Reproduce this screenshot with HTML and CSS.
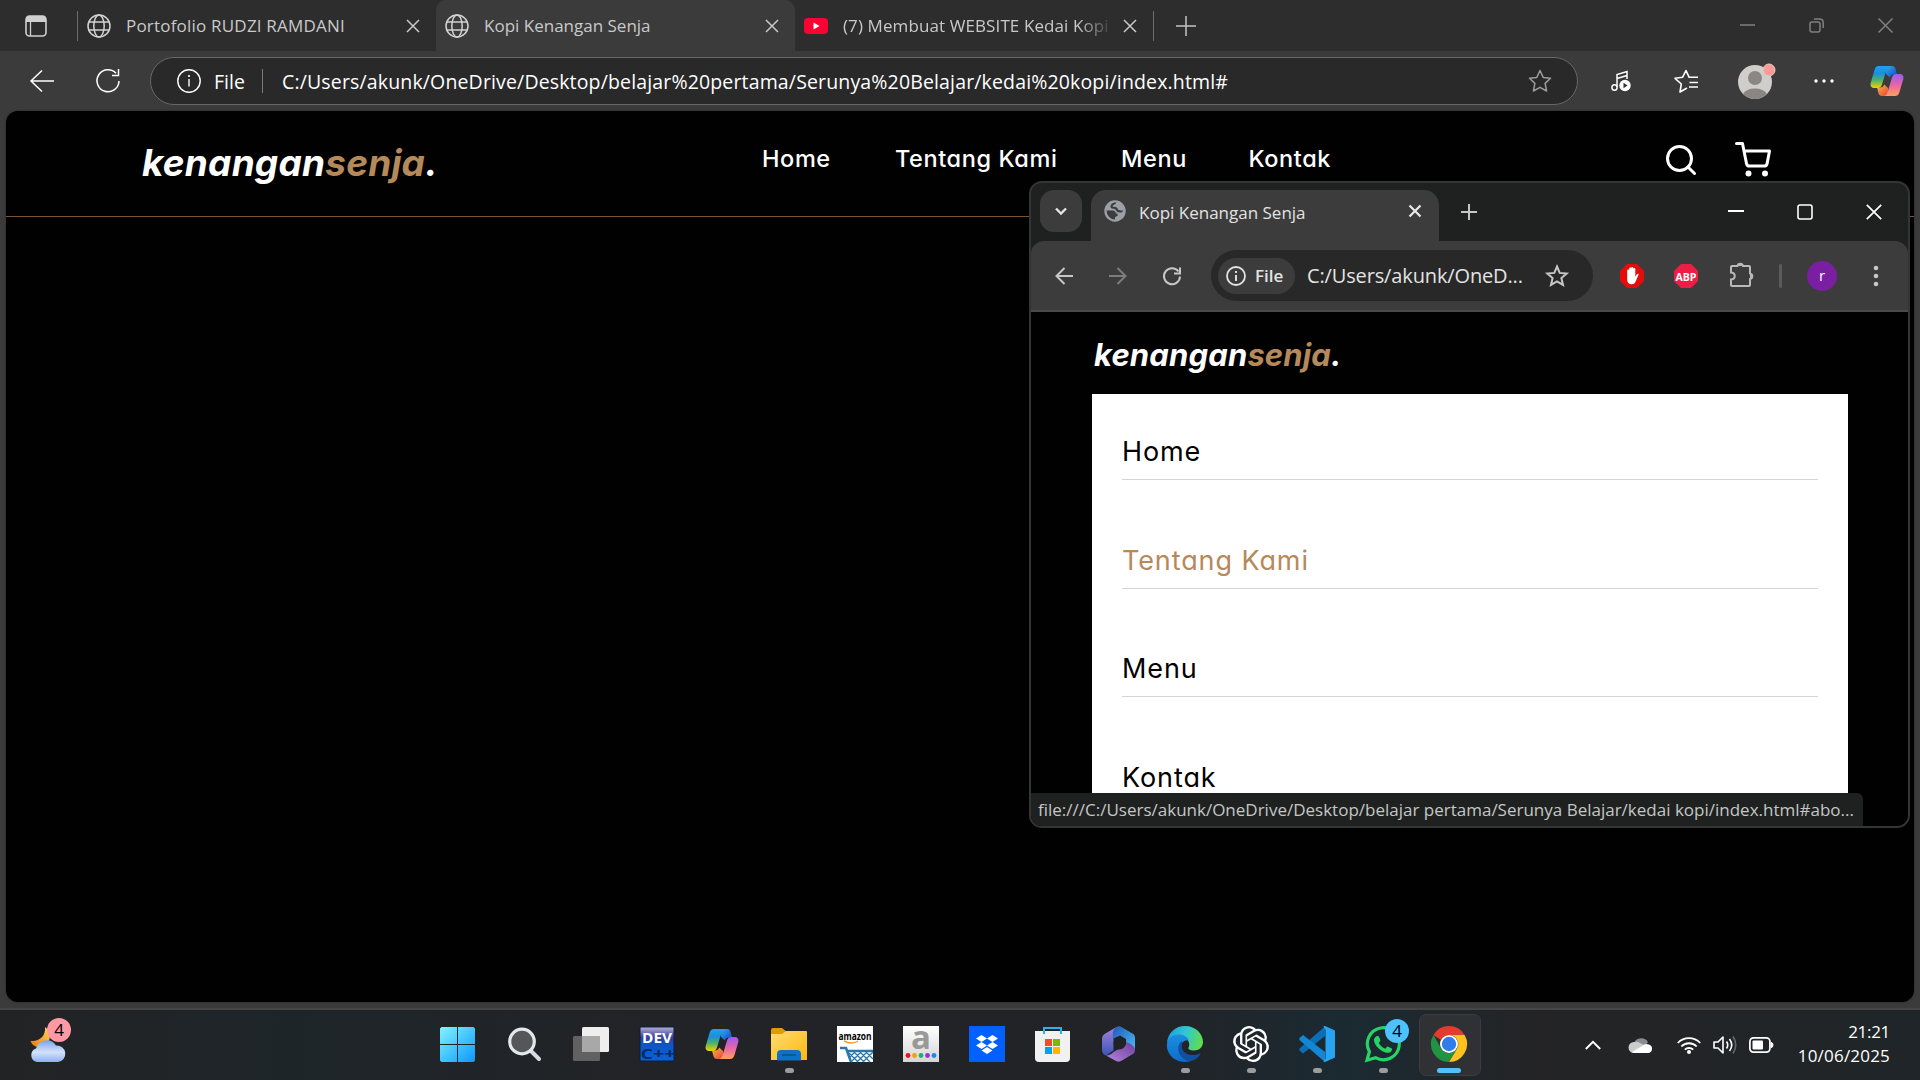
FILE: index.html
```html
<!DOCTYPE html>
<html lang="id">
<head>
<meta charset="utf-8">
<title>Kopi Kenangan Senja</title>
<link rel="stylesheet" href="styles.css">
</head>
<body>
<svg class="defs" width="0" height="0">
  <defs>
    <linearGradient id="cpL" x1="0" y1="0" x2="0" y2="1"><stop offset="0" stop-color="#1fa0f5"/><stop offset=".35" stop-color="#1b8fd8"/><stop offset=".65" stop-color="#4fb36a"/><stop offset="1" stop-color="#f7d000"/></linearGradient>
    <linearGradient id="cpR" x1="0" y1="0" x2="0" y2="1"><stop offset="0" stop-color="#9a5cf5"/><stop offset=".5" stop-color="#e765a8"/><stop offset="1" stop-color="#ffa05c"/></linearGradient>
    <linearGradient id="cpT" x1="0" y1="0" x2="1" y2="1"><stop offset="0" stop-color="#27b4f0"/><stop offset="1" stop-color="#1740c8"/></linearGradient>
    <linearGradient id="cpB" x1="0" y1="0" x2="1" y2="1"><stop offset="0" stop-color="#ffb43c"/><stop offset="1" stop-color="#e5413c"/></linearGradient>
    <symbol id="copilot" viewBox="0 0 34 30">
      <path d="M15 0h7c2 0 3 1 3.600 3L27 8.500h-3c-2.500 0-3.500 1-4.200 3L16 8z" fill="url(#cpT)"/>
      <path d="M19 30h-7c-2 0-3-1-3.600-3L7 21.500h3c2.500 0 3.500-1 4.200-3L18 22z" fill="url(#cpB)"/>
      <path d="M9 0h11c-2 .3-2.800 1.500-3.500 3.500L12 18.500c-.8 2.500-2 3.500-4.500 3.500H4.500C1.500 22 0 20 .7 17L4.500 4C5.300 1.400 6.500 0 9 0z" fill="url(#cpL)"/>
      <path d="M25 30H14c2-.3 2.800-1.500 3.500-3.500L22 11.500c.8-2.500 2-3.500 4.500-3.500h3c3 0 4.500 2 3.800 5L29.500 26c-.8 2.600-2 4-4.500 4z" fill="url(#cpR)"/>
    </symbol>
    <symbol id="globe" viewBox="0 0 24 24"><g fill="none" stroke="#d2d2d2" stroke-width="1.500"><circle cx="12" cy="12" r="11"/><ellipse cx="12" cy="12" rx="5.200" ry="11"/><path d="M1.800 8h20.400M1.800 16h20.400"/></g></symbol>
    <symbol id="cross" viewBox="0 0 14 14"><path d="M1 1l12 12M13 1L1 13" fill="none" stroke="currentColor" stroke-width="1.500"/></symbol>
  </defs>
</svg>

<div class="edge">
  <div class="tabstrip">
    <svg class="workspaces" viewBox="0 0 22 22"><rect x="1" y="1" width="20" height="20" rx="3.500" fill="none" stroke="#d0d0d0" stroke-width="1.600"/><path d="M1 7V4a3 3 0 013-3h14a3 3 0 013 3v3z" fill="#d0d0d0"/><path d="M5.500 7v14" stroke="#d0d0d0" stroke-width="1.300"/></svg>
    <i class="strip-line"></i>
    <div class="tab tab-one"><svg class="ico24"><use href="#globe"/></svg><span class="tab-title">Portofolio RUDZI RAMDANI</span><svg class="tab-x"><use href="#cross"/></svg></div>
    <div class="tab tab-two"><svg class="ico24"><use href="#globe"/></svg><span class="tab-title">Kopi Kenangan Senja</span><svg class="tab-x"><use href="#cross"/></svg></div>
    <div class="tab tab-three"><svg class="ico24" viewBox="0 0 24 24"><rect y="4" width="24" height="16" rx="4" fill="#ff0033"/><path d="M9.500 8.600v6.800l6-3.400z" fill="#fff"/></svg><span class="tab-title fade">(7) Membuat WEBSITE Kedai Kopi</span><svg class="tab-x"><use href="#cross"/></svg></div>
    <i class="strip-line"></i>
    <svg class="new-tab" viewBox="0 0 20 20"><path d="M10 0v20M0 10h20" stroke="#c4c4c4" stroke-width="1.500"/></svg>
    <div class="edge-controls">
      <svg viewBox="0 0 15 15"><path d="M0 7h15" stroke="#808080" stroke-width="1.500"/></svg>
      <svg viewBox="0 0 15 15"><g fill="none" stroke="#808080" stroke-width="1.500"><rect x="1" y="4" width="10" height="10" rx="2"/><path d="M5 1h5.500A3.700 3.700 0 0114.200 4.500V10"/></g></svg>
      <svg viewBox="0 0 15 15"><path d="M.5.5l14 14M14.500.5l-14 14" stroke="#808080" stroke-width="1.500"/></svg>
    </div>
  </div>

  <div class="edge-bar">
    <svg class="ico24 back" viewBox="0 0 24 24"><path d="M24 12H1M12 1.500L1 12l11 10.500" fill="none" stroke="#fff" stroke-width="1.500"/></svg>
    <svg class="ico24 reload" viewBox="0 0 24 24"><path d="M20 4.200A11 11 0 1023 12M22.500 0v6.500H16" fill="none" stroke="#fff" stroke-width="1.500"/></svg>
    <div class="address">
      <svg class="ico24" viewBox="0 0 24 24"><circle cx="12" cy="12" r="11.200" fill="none" stroke="#fff" stroke-width="1.400"/><path d="M12 10v7.500" stroke="#fff" stroke-width="1.400"/><circle cx="12" cy="7" r="1.100" fill="#fff"/></svg>
      <span class="addr-file">File</span><i class="addr-line"></i>
      <span class="addr-url">C:/Users/akunk/OneDrive/Desktop/belajar%20pertama/Serunya%20Belajar/kedai%20kopi/index.html#</span>
      <svg class="ico24 addr-star" viewBox="0 0 24 24"><path d="M12 1.500l3.200 6.900 7.300.8-5.400 5.200 1.500 7.600-6.600-3.700L5.400 22l1.500-7.600L1.500 9.200l7.300-.8z" fill="none" stroke="#9c9c9c" stroke-width="1.500" stroke-linejoin="round"/></svg>
    </div>
    <svg class="music" viewBox="0 0 20 22"><g fill="none" stroke="#fff" stroke-width="1.500"><path d="M6 17V4.500l10-3V9M6 8.500l10-3"/><ellipse cx="3.500" cy="17.500" rx="2.600" ry="2.800"/></g><circle cx="14" cy="15.500" r="5.700" fill="#fff"/><path d="M12.500 12.800v5.400l4-2.700z" fill="#333"/></svg>
    <svg class="favs" viewBox="0 0 24 24"><g fill="none" stroke="#fff" stroke-width="1.600" stroke-linejoin="round"><path d="M13 19l-7 4 1.300-8L1 9.300l7.500-1L12 1.500l3.200 6.800H24M15.500 13.500H24M15 18h9"/></g></svg>
    <div class="profile"><svg viewBox="0 0 38 36"><circle cx="17" cy="19" r="17" fill="#d0cecb"/><circle cx="17" cy="15" r="7" fill="#8a8683"/><path d="M5 31a13 9 0 0124 0 17 17 0 01-24 0z" fill="#8a8683"/><circle cx="31" cy="7" r="6" fill="#ff9a94" stroke="#d8cfcc" stroke-width="1"/></svg></div>
    <svg class="more" viewBox="0 0 20 4"><g fill="#fff"><circle cx="2" cy="2" r="1.700"/><circle cx="10" cy="2" r="1.700"/><circle cx="18" cy="2" r="1.700"/></g></svg>
    <svg class="edge-copilot"><use href="#copilot"/></svg>
  </div>

  <div class="page">
    <div class="navbar">
      <a class="logo logo-lg">kenangan<span>senja</span>.</a>
      <div class="links"><a>Home</a><a>Tentang Kami</a><a>Menu</a><a>Kontak</a></div>
      <div class="extra">
        <svg viewBox="0 0 24 24"><circle cx="11" cy="11" r="8"/><path d="M21 21l-4.350-4.350"/></svg>
        <svg viewBox="0 0 24 24"><circle cx="9" cy="21" r="1"/><circle cx="20" cy="21" r="1"/><path d="M1 1h4l2.680 13.390a2 2 0 002 1.610h9.720a2 2 0 002-1.610L23 6H6"/></svg>
      </div>
    </div>
  </div>
</div>

<div class="chrome">
  <div class="chrome-top">
    <div class="drop"><svg viewBox="0 0 12 8"><path d="M1 1.500l5 5 5-5" fill="none" stroke="#e3e3e3" stroke-width="2.400"/></svg></div>
    <div class="chrome-tab">
      <svg class="fav" viewBox="0 0 22 22"><circle cx="11" cy="11" r="10.700" fill="#9aa0a6"/><path d="M2.600 10.500h6c2 0 3.200 1.200 3.200 3h1.800v2.600c-1 .3-2.600.2-2.600 1.800v1.700A8.800 8.800 0 012.600 10.500z" fill="#3c3c3c"/><path d="M12.500 2.500c-1 2.700-3.800 1.500-3.800 4.300 2.300.2 4.200 0 4.800 1.800.5 1.700 2 2.300 5.800 1.800-.5 1.500-1.800 2.200-3.400 2.200-2.700 0-3.300-1-4.100-2.800-1-1.500-4.800-.5-5.300-2.800C6.200 4.500 8.700 2 12.500 2.500z" fill="#3c3c3c"/></svg>
      <span class="chrome-title">Kopi Kenangan Senja</span>
      <svg class="chrome-x" viewBox="0 0 14 14"><path d="M1.500 1.500l11 11M12.500 1.500l-11 11" stroke="#e6e6e6" stroke-width="2.300"/></svg>
    </div>
    <svg class="chrome-plus" viewBox="0 0 16 16"><path d="M8 0v16M0 8h16" stroke="#c7c7c7" stroke-width="2"/></svg>
    <div class="chrome-controls">
      <svg viewBox="0 0 16 16"><path d="M0 7h16" stroke="#fff" stroke-width="2"/></svg>
      <svg viewBox="0 0 16 16"><rect x="1" y="1" width="14" height="14" rx="2" fill="none" stroke="#fff" stroke-width="1.600"/></svg>
      <svg viewBox="0 0 16 16"><path d="M.8.8l14.400 14.400M15.200.8L.8 15.200" stroke="#fff" stroke-width="1.700"/></svg>
    </div>
  </div>
  <div class="chrome-bar">
    <svg class="arrow" viewBox="0 0 18 18"><path d="M18 9H2M9.500 1L1.500 9l8 8" fill="none" stroke="#c7c7c7" stroke-width="2"/></svg>
    <svg class="arrow" viewBox="0 0 18 18"><path d="M0 9h16M8.500 1l8 8-8 8" fill="none" stroke="#7d7d7d" stroke-width="2"/></svg>
    <svg class="arrow" viewBox="0 0 18 18"><path d="M15.500 4.500A8 8 0 1017 9.500M17 .5v6h-6" fill="none" stroke="#c7c7c7" stroke-width="2"/></svg>
    <div class="omnibox">
      <div class="chip"><svg viewBox="0 0 20 20"><circle cx="10" cy="10" r="9" fill="none" stroke="#e3e3e3" stroke-width="1.800"/><path d="M10 9v6M10 5v2" stroke="#e3e3e3" stroke-width="1.900"/></svg><span>File</span></div>
      <span class="omni-url">C:/Users/akunk/OneD...</span>
      <svg class="omni-star" viewBox="0 0 24 24"><path d="M12 2.500l2.700 6.400 7 .6-5.300 4.600 1.600 6.800-6-3.600-6 3.600 1.600-6.800-5.300-4.600 7-.6z" fill="none" stroke="#c7c7c7" stroke-width="2"/></svg>
    </div>
    <div class="ext">
      <svg viewBox="0 0 24 24"><path d="M7 0h10l7 7v10l-7 7H7l-7-7V7z" fill="#e40d0d"/><path d="M7.200 12V6.500a1 1 0 012 0V4.600a1 1 0 012 0V4a1 1 0 012 0v1a1 1 0 012.100 0v7.800l1.500-2.500c.9-1.200 2.200-.6 1.700.5l-3 7c-.8 1.700-1.800 2.500-3.800 2.500-3 0-4.500-1.800-4.500-4.600z" fill="#fff"/></svg>
      <svg viewBox="0 0 24 24"><path d="M7 0h10l7 7v10l-7 7H7l-7-7V7z" fill="#ed1e45"/><text x="12" y="16.500" text-anchor="middle" class="abp" textLength="21" lengthAdjust="spacingAndGlyphs">ABP</text></svg>
      <svg class="puzzle" viewBox="0 0 26 26"><path d="M3 4h5.500a2.800 2.800 0 015.500 0H20a1 1 0 011 1v6.500a2.800 2.800 0 010 5.500V23a1 1 0 01-1 1H3a1 1 0 01-1-1v-5.500c5-.5 5-6.500 0-7V5a1 1 0 011-1z" fill="none" stroke="#b9b9b9" stroke-width="2"/><path d="M8.500 4a2.800 2.800 0 015.500 0zM21 11.500a2.800 2.800 0 010 5.500z" fill="#b9b9b9"/></svg>
    </div>
    <i class="ext-line"></i>
    <div class="avatar">r</div>
    <svg class="dots" viewBox="0 0 6 22"><g fill="#c7c7c7"><circle cx="3" cy="3" r="2.300"/><circle cx="3" cy="11" r="2.300"/><circle cx="3" cy="19" r="2.300"/></g></svg>
  </div>
  <div class="mobile">
    <a class="logo logo-sm">kenangan<span>senja</span>.</a>
    <div class="panel">
      <a>Home</a><a class="on">Tentang Kami</a><a>Menu</a><a>Kontak</a>
    </div>
  </div>
  <div class="status">file:///C:/Users/akunk/OneDrive/Desktop/belajar pertama/Serunya Belajar/kedai kopi/index.html#abo...</div>
</div>

<div class="taskbar">
  <div class="weather">
    <svg viewBox="0 0 38 46">
      <defs><linearGradient id="cl" x1="0" y1="0" x2="0" y2="1"><stop offset="0" stop-color="#7ba4ea"/><stop offset=".55" stop-color="#d3e2fa"/><stop offset="1" stop-color="#8fb0ee"/></linearGradient><linearGradient id="mn" x1="0" y1="1" x2="1" y2="0"><stop offset="0" stop-color="#f0760c"/><stop offset="1" stop-color="#ffd75a"/></linearGradient></defs>
      <path d="M15 8c8 6 6 20-6 20-4 0-7-2-8.500-6C9 23 16 17 15 8z" fill="url(#mn)"/>
      <path d="M7 43a7 7 0 01-1-13.500A11 11 0 0126 26.500 8.300 8.300 0 0128 43z" fill="url(#cl)"/>
    </svg>
    <span class="badge badge-w">4</span>
  </div>
  <div class="apps">
    <div class="app"><svg viewBox="0 0 36 36"><defs><linearGradient id="win" gradientUnits="userSpaceOnUse" x1="0" y1="0" x2="35" y2="36"><stop offset="0" stop-color="#80f5ff"/><stop offset="1" stop-color="#0a95ff"/></linearGradient></defs><path d="M-1 2.500L.5 1H16v17H-1zM17 1h15.500L34 2.500V18H17zM-1 19h17v17H.5L-1 34.500zM17 19h17v15.500L32.500 36H17z" fill="url(#win)"/></svg></div>
    <div class="app"><svg viewBox="0 0 36 36"><path d="M22 23l10 10" stroke="#d6dcdf" stroke-width="4" stroke-linecap="round"/><circle cx="15" cy="15.500" r="12.300" fill="#55565a" stroke="#e4e8ea" stroke-width="3.200"/></svg></div>
    <div class="app"><svg viewBox="0 0 36 36"><rect x="9" y="1" width="27" height="25" rx="1.500" fill="#eee"/><rect x="0" y="10" width="27" height="25" rx="1.500" fill="#666" opacity=".93"/><rect x="9" y="10" width="18" height="16" fill="#a8a8a8"/></svg></div>
    <div class="app"><svg viewBox="0 0 36 36"><defs><linearGradient id="dv" x1="0" y1="0" x2="0" y2="1"><stop offset="0" stop-color="#b5b3d6"/><stop offset=".3" stop-color="#3a3f98"/><stop offset=".5" stop-color="#0f52c8"/><stop offset="1" stop-color="#0864d8"/></linearGradient></defs><rect x="1" y="1" width="34" height="34" rx="1" fill="url(#dv)" stroke="#111a3a"/><text x="18" y="17" class="dev" text-anchor="middle" fill="#fff" textLength="30" lengthAdjust="spacingAndGlyphs">DEV</text><text x="19" y="32.500" class="dev" text-anchor="middle" fill="#082a66" textLength="35" lengthAdjust="spacingAndGlyphs">C++</text></svg></div>
    <div class="app"><svg class="app-copilot"><use href="#copilot"/></svg></div>
    <div class="app run"><svg viewBox="0 0 36 36"><defs><linearGradient id="fo" x1="0" y1="0" x2="1" y2="1"><stop offset="0" stop-color="#ffdc72"/><stop offset="1" stop-color="#fbb80f"/></linearGradient></defs><path d="M0 4a2 2 0 012-2h9l5 4v4H0z" fill="#e09b06"/><path d="M0 8h11l4-3h20a1 1 0 011 1v28H0z" fill="url(#fo)"/><path d="M6 34.500V28a4 4 0 014-4h16a4 4 0 014 4v6.500z" fill="#0d72c4"/><path d="M11 29h14" stroke="#0a4f90" stroke-width="1.500"/></svg></div>
    <div class="app"><svg viewBox="0 0 36 36"><path fill="#fff" d="M0 0h36v36H0z"/><text x="18" y="13.500" class="amz" text-anchor="middle" textLength="33" lengthAdjust="spacingAndGlyphs">amazon</text><path d="M7 15q8 4 14 0" fill="none" stroke="#f79a1f" stroke-width="1.500"/><path d="M3 22h6l5 14M11 25h25" fill="none" stroke="#2a78ab" stroke-width="2.500"/><path d="M12 27l9 9M17 26l10 10M23 26l10 10M29 26l7 7M36 26L26 36M30 26L20 36M24 26L14 36M18 26l-5 5" stroke="#2a78ab" stroke-width="1.300"/></svg></div>
    <div class="app"><svg viewBox="0 0 36 36"><defs><linearGradient id="ag" x1="0" y1="0" x2="0" y2="1"><stop offset="0" stop-color="#fff"/><stop offset="1" stop-color="#d5d5d5"/></linearGradient></defs><path fill="url(#ag)" d="M0 0h36v36H0z"/><text x="18" y="22.500" class="bige" text-anchor="middle">a</text><circle cx="5" cy="29.500" r="2.400" fill="#ee1111"/><circle cx="11.500" cy="29.500" r="2.400" fill="#f39c12"/><circle cx="18" cy="29.500" r="2.400" fill="#27ae60"/><circle cx="24.500" cy="29.500" r="2.400" fill="#8e35d8"/><circle cx="31" cy="29.500" r="2.400" fill="#1e88e5"/></svg></div>
    <div class="app"><svg viewBox="0 0 36 36"><path fill="#0061ff" d="M0 0h36v36H0z"/><path d="M12.500 9l5.500 3.500-5.500 3.500L7 12.500zM23.500 9l5.500 3.500-5.500 3.500-5.500-3.500zM12.500 16l5.500 3.500-5.500 3.500L7 19.500zM23.500 16l5.500 3.500-5.500 3.500-5.500-3.500zM18 21l5.500 3.500L18 28l-5.500-3.500z" fill="#fff"/></svg></div>
    <div class="app"><svg viewBox="0 0 36 36"><path d="M9 8V2h17v6" fill="none" stroke="#2db0ec" stroke-width="2"/><path d="M0 5h35v27a4 4 0 01-4 4H4a4 4 0 01-4-4z" fill="#f1f1f1"/><path d="M9 8V5M26 8V5" stroke="#2db0ec" stroke-width="2"/><path d="M10 13h7v7h-7z" fill="#f04e23"/><path d="M18 13h7v7h-7z" fill="#7db700"/><path d="M10 21h7v7h-7z" fill="#00a3ee"/><path d="M18 21h7v7h-7z" fill="#ffb800"/></svg></div>
    <div class="app"><svg viewBox="0 0 36 36"><defs><linearGradient id="m1" x1="0" y1="0" x2="0" y2="1"><stop offset="0" stop-color="#a583dc"/><stop offset="1" stop-color="#3a55b8"/></linearGradient><linearGradient id="m2" x1="0" y1="0" x2="1" y2="1"><stop offset="0" stop-color="#2357b8"/><stop offset="1" stop-color="#48bdf5"/></linearGradient><linearGradient id="m3" x1="0" y1="1" x2="1" y2="0"><stop offset="0" stop-color="#b484e0"/><stop offset="1" stop-color="#6a3f9a"/></linearGradient></defs><path d="M16 .8L3.500 8A5 5 0 001 12v12c0 3 1.500 4.500 4 5.500l7.500-5V12.500c0-5 1.500-9 3.500-11.700z" fill="url(#m1)"/><path d="M14 2c3-2.500 5-2.500 8 0l9.500 5.500c1.800 1 2.500 2.500 2.500 4.500v12c-1-3-4-4.500-9-7.500V13l-6-3.500-6.500 3C11 9 12 4 14 2z" fill="url(#m2)"/><path d="M34 24c0 2-1 3.500-3 4.500l-10 6c-2.500 1.500-4.500 1.500-7 0L5 29.500c3 0 5.500-1.500 7.500-3.500l12.500-7v-3c6 2 9 5 9 8z" fill="url(#m3)"/><circle cx="18.500" cy="17.500" r="6" fill="#202326"/></svg></div>
    <div class="app run"><svg viewBox="0 0 36 36"><defs><linearGradient id="e1" x1="0" y1=".3" x2="1" y2=".5"><stop offset="0" stop-color="#1c9fe0"/><stop offset=".5" stop-color="#31c6d4"/><stop offset="1" stop-color="#62de4a"/></linearGradient><linearGradient id="e2" x1="0" y1="0" x2="0" y2="1"><stop offset="0" stop-color="#1a8fe0"/><stop offset="1" stop-color="#0d6ccd"/></linearGradient></defs><path d="M0 17C1 6 9 0 18 0c11 0 18 8 18 16 0 5-4 8.500-9 8.500-4 0-6.500-1.500-5.500-3 1.500-2 1-6-2-8.500C14 8 5 10 0 17z" fill="url(#e1)"/><path d="M0 18C1 10 8 8.500 12 8.500c5 0 9 3 10 6-8-2-10 8-6 13.500 2 3 5 6 8 7C11 39-1 30 0 18z" fill="url(#e2)"/><path d="M15 15c-6 4-5 15 4 19.500 6 2 12-2 14.500-6.500.3-.8-.3-1-1-.5-8 4-17 0-17.500-6-.2-2.500 0-5 0-6.500z" fill="#1050a0"/></svg></div>
    <div class="app run"><svg viewBox="0 0 24 24"><path fill="#fff" d="M22.2819 9.8211a5.9847 5.9847 0 0 0-.5157-4.9108 6.0462 6.0462 0 0 0-6.5098-2.9A6.0651 6.0651 0 0 0 4.9807 4.1818a5.9847 5.9847 0 0 0-3.9977 2.9 6.0462 6.0462 0 0 0 .7427 7.0966 5.98 5.98 0 0 0 .511 4.9107 6.051 6.051 0 0 0 6.5146 2.9001A5.9847 5.9847 0 0 0 13.2599 24a6.0557 6.0557 0 0 0 5.7718-4.2058 5.9894 5.9894 0 0 0 3.9977-2.9001 6.0557 6.0557 0 0 0-.7475-7.0729zm-9.022 12.6081a4.4755 4.4755 0 0 1-2.8764-1.0408l.1419-.0804 4.7783-2.7582a.7948.7948 0 0 0 .3927-.6813v-6.7369l2.02 1.1686a.071.071 0 0 1 .038.052v5.5826a4.504 4.504 0 0 1-4.4945 4.4944zm-9.6607-4.1254a4.4708 4.4708 0 0 1-.5346-3.0137l.142.0852 4.783 2.7582a.7712.7712 0 0 0 .7806 0l5.8428-3.3685v2.3324a.0804.0804 0 0 1-.0332.0615L9.74 19.9502a4.4992 4.4992 0 0 1-6.1408-1.6464zM2.3408 7.8956a4.485 4.485 0 0 1 2.3655-1.9728V11.6a.7664.7664 0 0 0 .3879.6765l5.8144 3.3543-2.0201 1.1685a.0757.0757 0 0 1-.071 0l-4.8303-2.7865A4.504 4.504 0 0 1 2.3408 7.872zm16.5963 3.8558L13.1038 8.364 15.1192 7.2a.0757.0757 0 0 1 .071 0l4.8303 2.7913a4.4944 4.4944 0 0 1-.6765 8.1042v-5.6772a.79.79 0 0 0-.407-.667zm2.0107-3.0231l-.142-.0852-4.7735-2.7818a.7759.7759 0 0 0-.7854 0L9.409 9.2297V6.8974a.0662.0662 0 0 1 .0284-.0615l4.8303-2.7866a4.4992 4.4992 0 0 1 6.6802 4.66zM8.3065 12.863l-2.02-1.1638a.0804.0804 0 0 1-.038-.0567V6.0742a4.4992 4.4992 0 0 1 7.3757-3.4537l-.142.0805L8.704 5.459a.7948.7948 0 0 0-.3927.6813zm1.0976-2.3654l2.602-1.4998 2.6069 1.4998v2.9994l-2.5974 1.4997-2.6067-1.4997Z"/></svg></div>
    <div class="app run"><svg viewBox="0 0 36 36"><path d="M26 10L4 27.500l-3-2.500c-1-1-1-2 0-3L26 .5z" fill="#0b6fb8"/><path d="M26 26L4 9 1 11.500c-1 1-1 2 0 3L26 36z" fill="#1487d4"/><path d="M26 0l9 4c.7.300 1 .8 1 1.500v25c0 .7-.3 1.200-1 1.500l-9 4c-1 .3-1.500 0-1.500-.5l2-3V4l-2-3.500C24.500 0 25 0 26 0z" fill="#27a5f2"/></svg></div>
    <div class="app run"><svg viewBox="0 0 36 36"><path d="M2 34.200l2.400-8.600A16 16 0 1110.500 31.700z" fill="none" stroke="#25d366" stroke-width="3.200"/><path d="M12.500 10c.8 0 1.200.2 1.600 1.100l1.200 3c.2.600 0 1-1.600 2.900 1.800 3.200 3.700 4.500 6.600 5.800 1.900-2.200 1.900-2.500 2.800-2.100l3.200 1.600c.9.500.8.700.6 1.600-.6 2.400-3 3.200-5 2.900C16 26 9.500 19.500 9 14.500c-.2-2 1.500-4.500 3.500-4.500z" fill="#25d366"/></svg><span class="badge badge-a">4</span></div>
    <div class="app active"><svg viewBox="0 0 36 36"><path d="M2.400 9A18 18 0 0133.600 9H18a9 9 0 00-8 5z" fill="#e33b2e"/><path d="M33.600 9A18 18 0 0118 36l8-13.500A9 9 0 0018 9z" fill="#fcc31e"/><path d="M2.400 9A18 18 0 0018 36l7.800-13.500a9 9 0 01-15.600 0z" fill="#229343"/><circle cx="18" cy="18" r="9" fill="#fff"/><circle cx="18" cy="18" r="7.200" fill="#2f7de9"/></svg></div>
  </div>
  <div class="tray">
    <svg class="t-up" viewBox="0 0 16 10"><path d="M.8 9L8 1.800 15.200 9" fill="none" stroke="#fff" stroke-width="1.900"/></svg>
    <svg class="t-cloud" viewBox="0 0 24 16"><path d="M5 6a8 8 0 0114-1l-5 7z" fill="#8a8c8f"/><path d="M5 16a5 5 0 010-11q3-1 6 1l6 3-8 7z" fill="#c9cbcc"/><path d="M3 15l10-6q3-3 7-1.500A4.500 4.500 0 0120 16H5q-1 0-2-1z" fill="#fff"/></svg>
    <svg class="t-wifi" viewBox="0 0 24 18"><g fill="none" stroke="#fff" stroke-width="1.800"><path d="M.8 7a15.500 15.500 0 0122.400 0M4.300 10.500a10.700 10.700 0 0115.400 0M7.800 13.700a6 6 0 018.400 0"/></g><circle cx="12" cy="16" r="2" fill="#fff"/></svg>
    <svg class="t-vol" viewBox="0 0 24 20"><g fill="none" stroke="#fff" stroke-width="1.600"><path d="M1 7h4l5-5v16l-5-5H1z" stroke-linejoin="round"/><path d="M13.500 6.500q2.500 3.500 0 7M16.500 4q4.500 6 0 12"/><path d="M20 1.500q5.500 8.500 0 17" stroke="#65696b"/></g></svg>
    <svg class="t-bat" viewBox="0 0 24 16"><rect x=".9" y=".9" width="20" height="14.200" rx="3.500" fill="none" stroke="#fff" stroke-width="1.700"/><rect x="3.500" y="3.500" width="10.500" height="9" rx="1" fill="#fff"/><path d="M22 5.500q2 0 2 2.500t-2 2.500z" fill="#fff" stroke="#fff"/></svg>
    <div class="clock"><span class="time">21:21</span><span class="date">10/06/2025</span></div>
  </div>
</div>
</body>
</html>
```
FILE: styles.css
```css
* { box-sizing: border-box; }
body { margin: 0; width: 1920px; height: 1080px; overflow: hidden; background: #3b3b3b; font-family: "Open Sans", "Noto Sans", sans-serif; color: #fff; display: flex; flex-direction: column; }
svg { display: block; flex: none; overflow: visible; }
i { display: block; flex: none; }
.defs { position: absolute; }

.edge { height: 1008px; display: flex; flex-direction: column; flex: none; }
.ico24 { width: 24px; height: 24px; }
.tabstrip { height: 51px; background: #2d2d2d; display: flex; align-items: center; flex: none; }
.workspaces { width: 22px; height: 22px; margin: 0 30px 0 25px; }
.strip-line { width: 1px; height: 30px; background: #6c6c6c; }
.tab { height: 51px; display: flex; align-items: center; color: #c9c9c9; }
.tab-title { font-size: 17px; white-space: nowrap; margin-left: 15px; flex: 1; }
.tab-x { width: 14px; height: 14px; color: #c9c9c9; }
.tab-one { width: 358px; padding: 0 16px 0 9px; letter-spacing: .2px; }
.tab-two { width: 359px; padding: 0 16px 0 9px; background: #3b3b3b; border-radius: 10px 10px 0 0; }
.tab-three { width: 358px; padding: 0 16px 0 9px; letter-spacing: .1px; }
.fade { -webkit-mask-image: linear-gradient(90deg, #000 88%, rgba(0, 0, 0, .15) 100%); mask-image: linear-gradient(90deg, #000 88%, rgba(0, 0, 0, .15) 100%); margin-right: 14px; }
.new-tab { width: 20px; height: 20px; margin-left: 22px; }
.edge-controls { display: flex; gap: 54px; margin-left: auto; padding-right: 27px; }
.edge-controls svg { width: 15px; height: 15px; }

.edge-bar { height: 60px; display: flex; align-items: center; flex: none; background: #3b3b3b; }
.back { margin: 0 42px 0 30px; }
.reload { margin-right: 30px; }
.address { width: 1428px; height: 48px; border: 1.500px solid #686868; border-radius: 24px; background: #292929; display: flex; align-items: center; padding-left: 26px; flex: none; font-size: 19.500px; }
.addr-file { margin-left: 13px; width: 48px; padding-top: 1px; }
.addr-line { width: 1px; height: 24px; background: #7c7c7c; }
.addr-url { margin-left: 19px; white-space: nowrap; flex: 1; padding-top: 1px; letter-spacing: .15px; }
.addr-star { margin-right: 25px; }
.music { width: 20px; height: 22px; margin-left: 33px; }
.favs { width: 24px; height: 24px; margin-left: 43px; }
.profile { width: 38px; margin-left: 40px; }
.profile svg { width: 38px; height: 36px; }
.more { width: 20px; height: 4px; margin-left: 38px; }
.edge-copilot { width: 34px; height: 30px; margin-left: 36px; }

.page { height: 891px; margin: 0 6px; background: #010101; border-radius: 12px; overflow: hidden; flex: none; box-shadow: 0 0 2px #222; }
.navbar { height: 106px; border-bottom: 1px solid #7a5436; display: flex; align-items: flex-start; padding-left: 136px; }
.logo { font-family: Inter, "Open Sans", sans-serif; font-feature-settings: "cv11"; font-weight: 700; font-style: italic; white-space: nowrap; color: #fff; }
.logo span { color: #b6895b; }
.logo-lg { font-size: 37px; line-height: 44px; margin-top: 30px; width: 620px; letter-spacing: .2px; }
.links { display: grid; grid-template-columns: 133px 226px 127.500px 80px; align-content: start; font-family: Inter, "Open Sans", sans-serif; font-feature-settings: "cv11"; font-size: 23.500px; line-height: 28px; letter-spacing: .6px; margin-top: 34px; width: 901px; font-weight: 500; white-space: nowrap; }
.extra { display: flex; gap: 36px; margin-top: 31px; }
.extra svg { width: 36px; height: 36px; fill: none; stroke: #fff; stroke-width: 2; stroke-linecap: round; stroke-linejoin: round; }

.chrome { position: absolute; left: 1029px; top: 181px; width: 881px; height: 647px; border: 2px solid #343636; border-radius: 13px; background: #1f2120; overflow: hidden; display: flex; flex-direction: column; }
.chrome-top { height: 58px; display: flex; align-items: center; padding: 0 26px 0 9px; flex: none; }
.drop { width: 42px; height: 42px; border-radius: 14px; background: #3c3c3c; display: flex; align-items: center; justify-content: center; margin-top: -2px; }
.drop svg { width: 12px; height: 8px; }
.chrome-tab { width: 348px; height: 51px; align-self: flex-end; margin-left: 9px; padding: 0 17px 9px 13px; background: #3c3c3c; border-radius: 15px 15px 0 0; display: flex; align-items: center; }
.fav { width: 22px; height: 22px; }
.chrome-title { font-size: 17px; color: #e3e3e3; margin-left: 13px; flex: 1; padding-top: 3px; }
.chrome-x { width: 14px; height: 14px; }
.chrome-plus { width: 16px; height: 16px; margin-left: 22px; }
.chrome-controls { display: flex; gap: 53px; margin-left: auto; }
.chrome-controls svg { width: 16px; height: 16px; }
.chrome-bar { height: 71px; background: #3c3c3c; border-bottom: 2px solid #4a4a4a; border-radius: 13px 13px 0 0; display: flex; align-items: center; flex: none; padding-left: 24px; }
.arrow { width: 18px; height: 18px; margin-right: 36px; }
.omnibox { width: 382px; height: 51px; border-radius: 26px; background: #282828; display: flex; align-items: center; padding-left: 7px; margin-left: -6px; flex: none; }
.chip { width: 77px; height: 36px; border-radius: 18px; background: #3c3c3c; display: flex; align-items: center; padding-left: 8px; font-size: 17px; font-weight: 600; color: #e3e3e3; }
.chip svg { width: 20px; height: 20px; margin-right: 9px; }
.omni-url { font-size: 20px; letter-spacing: -.14px; color: #e3e3e3; margin-left: 12px; flex: 1; white-space: nowrap; }
.omni-star { width: 24px; height: 24px; margin-right: 24px; }
.ext { display: flex; gap: 30px; margin-left: 27px; }
.ext svg { width: 24px; height: 24px; }
.ext .puzzle { width: 26px; height: 26px; margin-top: -2px; margin-left: 1px; }
.abp { font: 700 11px "Open Sans", sans-serif; fill: #fff; }
.ext-line { width: 3px; height: 24px; background: #5b5b5b; border-radius: 2px; margin-left: 24px; }
.avatar { width: 30px; height: 30px; border-radius: 15px; background: #7b1fa2; font-size: 15px; line-height: 28px; text-align: center; margin-left: 25px; }
.dots { width: 6px; height: 22px; margin-left: 36px; }
.mobile { height: 514px; background: #010101; padding-left: 61px; flex: none; }
.logo-sm { display: block; font-size: 31px; line-height: 38px; padding-top: 24px; padding-left: 2px; height: 82px; letter-spacing: .15px; }
.panel { width: 756px; height: 432px; background: #fff; padding: 0 30px; display: flex; flex-direction: column; }
.panel a { display: block; height: 108.600px; padding-top: 42px; font-family: Inter, "Open Sans", sans-serif; font-feature-settings: "cv11"; font-size: 27px; line-height: 32px; letter-spacing: .9px; color: #010101; flex: none; }
.panel a::after { content: ""; display: block; height: 1px; background: #d4d4d4; margin-top: 11px; }
.panel .on { color: #b6895b; }
.status { position: absolute; left: 0; bottom: 0; width: 832px; height: 33px; background: #1f2120; border-top-right-radius: 6px; padding-left: 7px; font-size: 17px; line-height: 34px; color: #c4c7c5; white-space: nowrap; }

.taskbar { height: 72px; border-top: 2px solid #464646; background: linear-gradient(90deg, #222325, #1e2529 15%, #222326 35%, #222326 60%, #1b2a32 70%, #242426 80%, #1f2528); display: flex; align-items: center; flex: none; }
.weather { position: relative; width: 38px; height: 46px; margin-left: 30px; margin-bottom: 6px; }
.badge { position: absolute; width: 24px; height: 24px; border-radius: 12px; color: #000; font-size: 17px; line-height: 24px; text-align: center; }
.badge-w { left: 17px; top: -1px; background: #ff99a4; }
.badge-a { left: 35px; top: 9px; background: #4cc2ff; }
.apps { display: flex; margin-left: 358px; }
.app { position: relative; width: 66px; height: 70px; padding: 16px 15px; }
.app svg { width: 36px; height: 36px; }
.app .app-copilot { width: 34px; height: 30px; margin-top: 3px; }
.run::after { content: ""; position: absolute; left: 29px; top: 58px; width: 9px; height: 5px; border-radius: 3px; background: #9a9c9d; }
.active::before { content: ""; position: absolute; left: 3px; top: 4px; width: 60px; height: 60px; border-radius: 7px; background: #2f3134; border: 1px solid #3a3c3f; }
.active svg { position: relative; }
.active::after { content: ""; position: absolute; left: 21px; top: 58px; width: 24px; height: 5px; border-radius: 3px; background: #4cc2ff; }
.tray { display: flex; align-items: center; margin-left: auto; padding-right: 30px; }
.t-up { width: 16px; height: 10px; margin-right: 28px; }
.t-cloud { width: 24px; height: 16px; margin-right: 24px; }
.t-wifi { width: 24px; height: 18px; margin-right: 12px; }
.t-vol { width: 24px; height: 20px; margin-right: 12px; }
.t-bat { width: 24px; height: 16px; }
.clock { width: 117px; display: flex; flex-direction: column; align-items: flex-end; font-size: 17px; line-height: 24px; margin-top: -2px; }
.time { letter-spacing: -.3px; }
.date { letter-spacing: .2px; }
.dev { font: 700 14px "Open Sans", sans-serif; }
.amz { font: 700 10px "Open Sans", sans-serif; }
.bige { font: 700 33px "Open Sans", sans-serif; fill: #999; }
```
